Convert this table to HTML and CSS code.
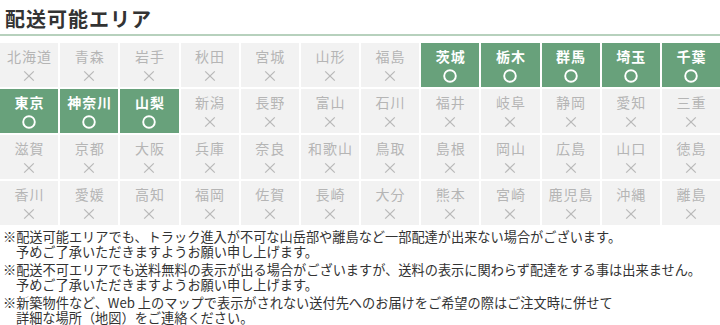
FILE: index.html
```html
<!DOCTYPE html>
<html lang="ja">
<head>
<meta charset="utf-8">
<link rel="stylesheet" href="styles.css">
</head>
<body>
<div class="page">
  <h2 class="title">配送可能エリア</h2>
  <div class="grid" id="grid"></div>
  <div class="notes">
    <p>※配送可能エリアでも、トラック進入が不可な山岳部や離島など一部配達が出来ない場合がございます。<br>予めご了承いただきますようお願い申し上げます。</p>
    <p>※配送不可エリアでも送料無料の表示が出る場合がございますが、送料の表示に関わらず配達をする事は出来ません。<br>予めご了承いただきますようお願い申し上げます。</p>
    <p>※新築物件など、Web 上のマップで表示がされない送付先へのお届けをご希望の際はご注文時に併せて<br>詳細な場所（地図）をご連絡ください。</p>
  </div>
</div>
<script>
var rows = [
  ["北海道","青森","岩手","秋田","宮城","山形","福島","茨城","栃木","群馬","埼玉","千葉"],
  ["東京","神奈川","山梨","新潟","長野","富山","石川","福井","岐阜","静岡","愛知","三重"],
  ["滋賀","京都","大阪","兵庫","奈良","和歌山","鳥取","島根","岡山","広島","山口","徳島"],
  ["香川","愛媛","高知","福岡","佐賀","長崎","大分","熊本","宮崎","鹿児島","沖縄","離島"]
];
var ok = {"茨城":1,"栃木":1,"群馬":1,"埼玉":1,"千葉":1,"東京":1,"神奈川":1,"山梨":1};
var circle = '<svg class="mark" width="14" height="14" viewBox="0 0 14 14"><circle cx="7" cy="7" r="5.8" fill="none" stroke="#fff" stroke-width="1.9"/></svg>';
var cross = '<svg class="mark" width="14" height="14" viewBox="0 0 14 14"><path d="M2.2 2.4 L11.8 11.6 M11.8 2.4 L2.2 11.6" stroke="#b9b9b9" stroke-width="1.3" fill="none"/></svg>';
var html = "";
rows.forEach(function (r) {
  r.forEach(function (n) {
    var a = ok[n];
    html += '<div class="cell' + (a ? ' on' : '') + '"><span class="name">' + n + '</span>' + (a ? circle : cross) + '</div>';
  });
});
document.getElementById("grid").innerHTML = html;
</script>
</body>
</html>
```

FILE: styles.css
```css
html, body {
  margin: 0;
  padding: 0;
  background: #fff;
}
body {
  font-family: "Noto Sans CJK JP", "Noto Sans", sans-serif;
  color: #333;
}
.page {
  width: 720px;
}
.title {
  margin: 0;
  padding: 4px 0 0 5px;
  height: 30px;
  line-height: 30px;
  font-size: 20px;
  font-weight: 700;
  letter-spacing: 1px;
  color: #333;
  border-bottom: 2px solid #b7d1bd;
}
.grid {
  margin-top: 7px;
  display: grid;
  grid-template-columns: repeat(12, 1fr);
  grid-auto-rows: 44px;
  gap: 2px;
}
.cell {
  background: #f2f2f2;
  display: flex;
  flex-direction: column;
  align-items: center;
  padding-top: 5px;
  box-sizing: border-box;
}
.cell.on {
  background: #68a17b;
}
.name {
  font-size: 14px;
  line-height: 17px;
  height: 17px;
  letter-spacing: 1px;
  margin-right: -1px;
  color: #b5b5b5;
  white-space: nowrap;
}
.cell.on .name {
  color: #fff;
  font-weight: 700;
}
.mark {
  display: block;
  margin-top: 4px;
}
.notes {
  margin-top: 4px;
  font-size: 13.2px;
  line-height: 15px;
  color: #333;
}
.notes p {
  margin: 0 0 3px 0;
  padding-left: 16px;
  text-indent: -13px;
  white-space: nowrap;
}
```
